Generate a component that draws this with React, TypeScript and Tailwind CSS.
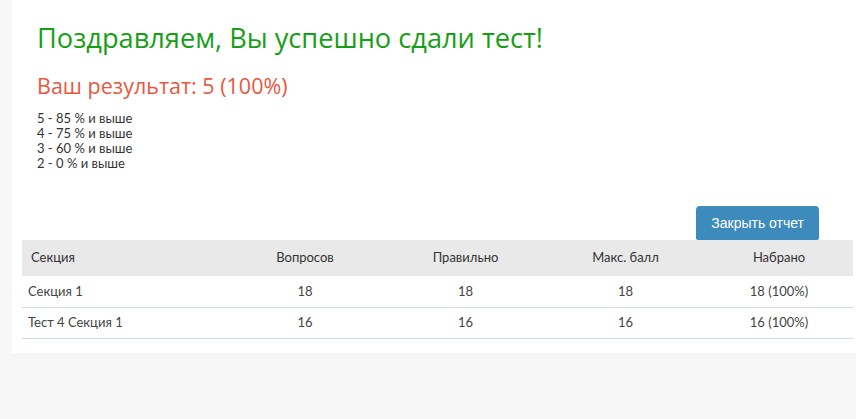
import React from "react";

const grades = [
  "5 - 85 % и выше",
  "4 - 75 % и выше",
  "3 - 60 % и выше",
  "2 - 0 % и выше",
];

const rows = [
  { name: "Секция 1", total: 18, correct: 18, max: 18, score: "18 (100%)" },
  { name: "Тест 4 Секция 1", total: 16, correct: 16, max: 16, score: "16 (100%)" },
];

export default function App() {
  return (
    <div className="min-h-[419px] bg-[#f6f6f6] pl-[12px] font-['Lato',sans-serif]">
      <div className="bg-white pl-[10px] pr-[3px] pb-[14px]">
        {/* Result summary */}
        <div className="px-[15px] pt-[18px]">
          <h1 className="font-['Open_Sans',sans-serif] text-[27.2px] leading-[40px] text-[#169f16]">
            Поздравляем, Вы успешно сдали тест!
          </h1>
          <h2 className="mt-[13px] font-['Open_Sans',sans-serif] text-[21.5px] leading-[30px] text-[#e9573f]">
            Ваш результат: 5 (100%)
          </h2>
          <div className="mt-[10px] text-[13px] leading-[15px] text-[#333]">
            {grades.map((g) => (
              <div key={g}>{g}</div>
            ))}
          </div>
        </div>

        <div className="mt-[35px] flex justify-end pr-[34px]">
          <button className="h-[34px] rounded-t-[4px] rounded-b-[2px] bg-[#3d8bbd] px-[15px] font-['Liberation_Sans',sans-serif] text-[14px] text-white">
            Закрыть отчет
          </button>
        </div>

        {/* Sections table */}
        <table className="w-full table-fixed border-collapse text-[13px] text-[#333]">
          <colgroup>
            <col className="w-[203px]" />
            <col className="w-[160px]" />
            <col className="w-[161px]" />
            <col className="w-[159px]" />
            <col />
          </colgroup>
          <thead>
            <tr className="h-[36px] bg-[#e9e9e9]">
              <th className="pl-[9px] text-left font-normal">Секция</th>
              <th className="font-normal">Вопросов</th>
              <th className="font-normal">Правильно</th>
              <th className="font-normal">Макс. балл</th>
              <th className="font-normal">Набрано</th>
            </tr>
          </thead>
          <tbody className="text-[#444]">
            {rows.map((r) => (
              <tr key={r.name} className="h-[31px] border-b border-[#d2dede]">
                <td className="pl-[6px]">{r.name}</td>
                <td className="text-center">{r.total}</td>
                <td className="text-center">{r.correct}</td>
                <td className="text-center">{r.max}</td>
                <td className="text-center">{r.score}</td>
              </tr>
            ))}
          </tbody>
        </table>
      </div>
    </div>
  );
}
